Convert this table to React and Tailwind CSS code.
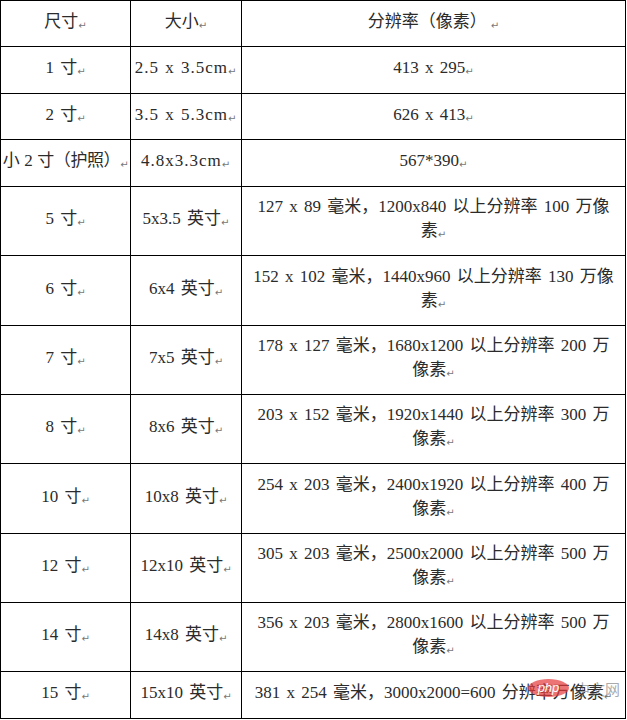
import React from "react";

const rows = [
  { size: "1 寸", dim: "2.5 x 3.5cm", res: ["413 x 295"], h: "h-[47px]", mono: true },
  { size: "2 寸", dim: "3.5 x 5.3cm", res: ["626 x 413"], h: "h-[46px]", mono: true },
  { size: "小 2 寸（护照）", dim: "4.8x3.3cm", res: ["567*390"], h: "h-[47px]", mono: true, tight: true },
  { size: "5 寸", dim: "5x3.5 英寸", res: ["127 x 89 毫米，1200x840 以上分辨率 100 万像", "素"], h: "h-[69px]" },
  { size: "6 寸", dim: "6x4 英寸", res: ["152 x 102 毫米，1440x960 以上分辨率 130 万像", "素"], h: "h-[70px]" },
  { size: "7 寸", dim: "7x5 英寸", res: ["178 x 127 毫米，1680x1200 以上分辨率 200 万", "像素"], h: "h-[69px]" },
  { size: "8 寸", dim: "8x6 英寸", res: ["203 x 152 毫米，1920x1440 以上分辨率 300 万", "像素"], h: "h-[69px]" },
  { size: "10 寸", dim: "10x8 英寸", res: ["254 x 203 毫米，2400x1920 以上分辨率 400 万", "像素"], h: "h-[70px]" },
  { size: "12 寸", dim: "12x10 英寸", res: ["305 x 203 毫米，2500x2000 以上分辨率 500 万", "像素"], h: "h-[69px]" },
  { size: "14 寸", dim: "14x8 英寸", res: ["356 x 203 毫米，2800x1600 以上分辨率 500 万", "像素"], h: "h-[69px]" },
  { size: "15 寸", dim: "15x10 英寸", res: ["381 x 254 毫米，3000x2000=600 分辨率万像素"], h: "h-[47px]" },
];

// Word paragraph mark
const Mark = () => (
  <span className="text-[10px] text-[#777] font-['DejaVu_Sans',sans-serif] align-[-2px] [word-spacing:0px]">↵</span>
);

const Cell = ({ children, className = "" }) => (
  <div
    className={`flex items-center justify-center text-center border-r border-b border-black ${className}`}
  >
    <div>{children}</div>
  </div>
);

export default function App() {
  return (
    <div className="relative w-[627px] h-[720px] bg-white overflow-hidden">
      <div className="w-[626px] border-l border-t border-black font-['Liberation_Serif','Noto_Sans_CJK_SC',serif] text-[17px] leading-[24px] text-[#2b2b2b] [word-spacing:2px]">
        <div className="grid grid-cols-[130px_111px_384px] h-[46px]">
          <Cell>
            尺寸<Mark />
          </Cell>
          <Cell>
            大小<Mark />
          </Cell>
          <Cell>
            分辨率（像素）<span className="ml-[4px]"><Mark /></span>
          </Cell>
        </div>
        {rows.map((r) => (
          <div key={r.size} className={`grid grid-cols-[130px_111px_384px] ${r.h}`}>
            <Cell className={r.tight ? "whitespace-nowrap tracking-[-0.4px] [word-spacing:1px]" : ""}>
              {r.size}
              <Mark />
            </Cell>
            <Cell className={r.mono ? "whitespace-nowrap tracking-[1px] [word-spacing:1px]" : "whitespace-nowrap"}>
              {r.dim}
              <Mark />
            </Cell>
            <Cell>
              {r.res.map((line, i) => (
                <div key={i} className="whitespace-nowrap">
                  {line}
                  {i === r.res.length - 1 && <Mark />}
                </div>
              ))}
            </Cell>
          </div>
        ))}
      </div>

      {/* site watermark */}
      <div className="absolute left-[528px] top-[679px] flex items-center gap-[6px] pointer-events-none">
        <div className="w-[41px] h-[18px] rounded-[50%] bg-[#e5393b]/70 flex items-center justify-center">
          <span className="text-white text-[13px] leading-none font-['Liberation_Sans',sans-serif] italic -mt-[2px]">
            php
          </span>
        </div>
        <span className="text-[15px] leading-none text-[#555]/50 font-['Noto_Sans_CJK_SC',sans-serif]">
          中文网
        </span>
      </div>
    </div>
  );
}
